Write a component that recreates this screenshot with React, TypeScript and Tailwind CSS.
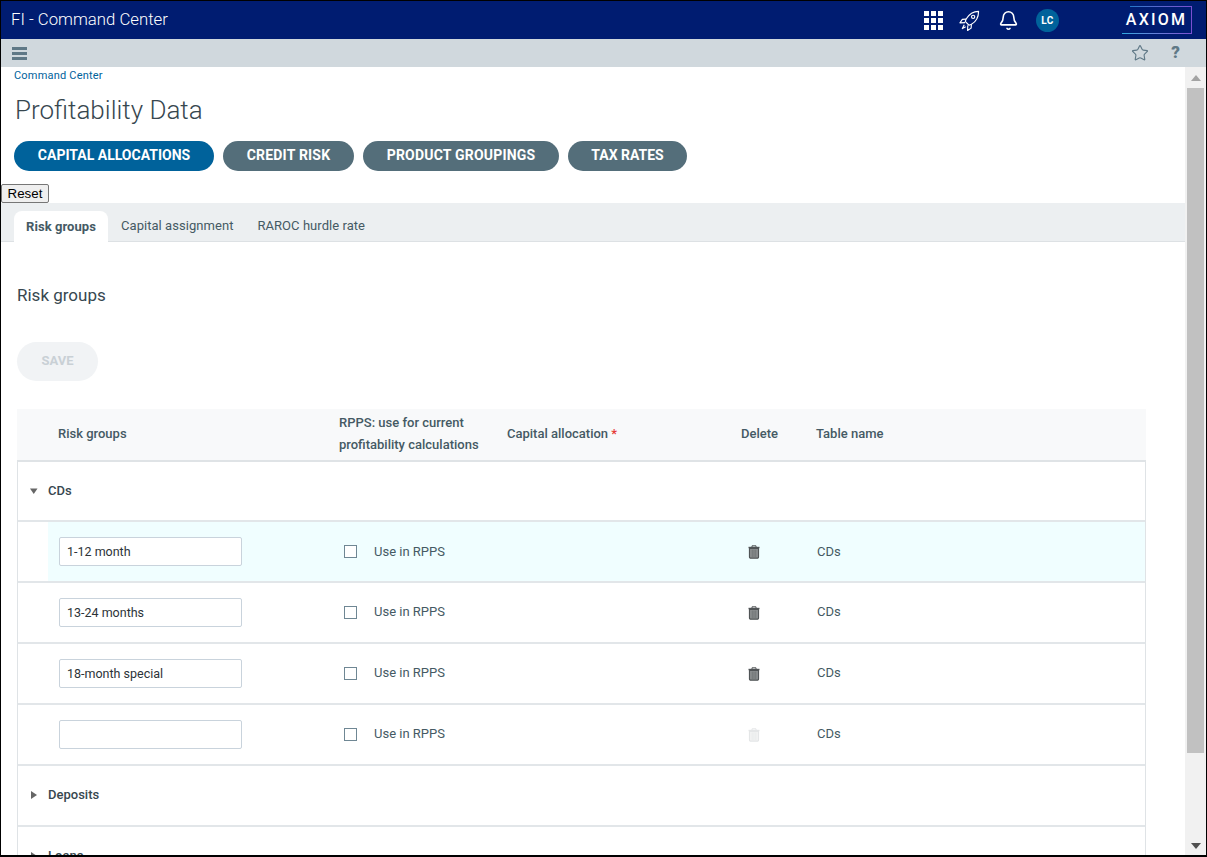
import { Bell, Star } from 'lucide-react'

const ROWS = [
  { value: '1-12 month', active: true },
  { value: '13-24 months' },
  { value: '18-month special' },
  { value: '', disabled: true },
]

const PILLS = [
  { label: 'CAPITAL ALLOCATIONS', style: 'w-[200px] bg-[#00629b]' },
  { label: 'CREDIT RISK', style: 'w-[131px] bg-[#546e7a] tracking-[0.2px]' },
  { label: 'PRODUCT GROUPINGS', style: 'w-[196px] bg-[#546e7a] tracking-[0.2px]' },
  { label: 'TAX RATES', style: 'w-[119px] bg-[#546e7a]' },
]

function Trash({ disabled }: { disabled?: boolean }) {
  const c = disabled ? '#e4e6e7' : '#505456'
  return (
    <svg width="12" height="14" viewBox="0 0 12 14" className="block">
      <path d="M4 2V.8h4V2" fill="none" stroke={c} strokeWidth="1" />
      <path d="M.5 2.5h11" stroke={c} strokeWidth="1.4" />
      <path d="M1.500 3.500h9V12a1.200 1.200 0 0 1-1.200 1.200H2.700A1.200 1.200 0 0 1 1.500 12z" fill={disabled ? '#f2f3f3' : '#8e9293'} stroke={c} strokeWidth="1.200" />
      <path d="M4.200 4.500v7.500M6 4.500v7.500M7.800 4.500v7.500" stroke={c} strokeWidth=".7" opacity=".7" />
    </svg>
  )
}

function Caret({ open }: { open?: boolean }) {
  return (
    <svg width="8" height="8" viewBox="0 0 8 8" className="block">
      {open ? <path d="M0 1.500h7.500L3.750 7z" fill="#666" /> : <path d="M1 0v8l6-4z" fill="#666" />}
    </svg>
  )
}

function RocketIcon() {
  return (
    <svg width="21" height="21" viewBox="0 0 22 22" fill="none" stroke="white" strokeWidth="1.200" strokeLinejoin="round" className="mr-[18px]">
      <path d="M20.500 1.500C15.500 1.500 10.500 4.500 7.500 9.500L6.500 12l4 4 2.500-1c5-3 7.500-8 7.500-13.500z" />
      <circle cx="14.800" cy="7.200" r="1.700" />
      <path d="M7.500 9.500 3.500 9.800 1 13.500l5.300-.3" />
      <path d="M13 15l-.3 4-3.700 2.500.2-5.400" />
      <path d="M5.500 15.500 3.500 19.500l3.500-2" />
    </svg>
  )
}

function Group({ name, open, first }: { name: string; open?: boolean; first?: boolean }) {
  return (
    <div className={`${first ? 'h-[60px]' : 'h-[61px] pb-[2px]'} border-b-2 border-[#e2e6e9] flex items-center text-[13px] font-medium text-[#37474f] pl-[12px]`}>
      <span className="w-[18px]"><Caret open={open} /></span>
      {name}
    </div>
  )
}

export default function App() {
  return (
    <div className="h-[857px] overflow-hidden border border-b-2 border-black flex flex-col bg-white font-['Roboto',sans-serif]">
      {/* Top bar */}
      <div className="h-[38px] shrink-0 bg-[#001c71] flex items-center text-white pl-[10px]">
        <span className="text-[16.750px] font-light flex-1">FI - Command Center</span>
        <div className="grid grid-cols-3 gap-[2px] w-[19px] mr-[16px]">
          {Array.from({ length: 9 }).map((_, i) => <span key={i} className="w-[5px] h-[5px] bg-white" />)}
        </div>
        <RocketIcon />
        <Bell size={21} strokeWidth={1.800} className="mr-[17px]" />
        <span className="w-[23px] h-[23px] rounded-full bg-[#00629b] text-[10px] font-bold flex items-center justify-center tracking-[0.5px] mr-[63px]">LC</span>
        <div className="relative w-[70px] h-[28px] mr-[14px] flex items-center justify-center pr-[1px] text-[16px] font-medium tracking-[2.200px]">
          AXIOM
          <span className="absolute right-0 top-0 left-[8px] h-[1px] bg-gradient-to-r from-[#1e78c8] to-[#7a4fd0]" />
          <span className="absolute right-0 top-0 bottom-0 w-[1px] bg-[#7a4fd0]" />
          <span className="absolute left-0 right-0 bottom-0 h-[1px] bg-gradient-to-r from-[#2aa8e0] to-[#7a4fd0]" />
        </div>
      </div>
      {/* Secondary bar */}
      <div className="h-[28px] shrink-0 bg-[#d0d8dd] flex items-center pl-[11px] pr-[26px] text-[#5f7886]">
        <div className="flex-1 flex flex-col gap-[2px]">
          <span className="w-[15px] h-[3px] bg-[#5f7886]" />
          <span className="w-[15px] h-[3px] bg-[#5f7886]" />
          <span className="w-[15px] h-[3px] bg-[#5f7886]" />
        </div>
        <Star size={18} strokeWidth={1.500} className="mr-[22px]" />
        <span className="text-[17px] font-black">?</span>
      </div>

      <div className="flex-1 min-h-0 flex">
        {/* Scrolling content */}
        <div className="flex-1 min-w-0 overflow-hidden">
          <div className="pl-[13px] pt-[2px] text-[11px] leading-[13px] tracking-[0.2px] text-[#00629b]">Command Center</div>
          <h1 className="pl-[14px] mt-[11px] text-[26px] leading-[34px] font-light text-[#37474f]">Profitability Data</h1>
          <div className="flex gap-[9px] pl-[13px] mt-[14px]">
            {PILLS.map(p => (
              <div key={p.label} className={`${p.style} h-[30px] pb-[1px] rounded-full flex items-center justify-center text-white text-[14px] font-bold`}>{p.label}</div>
            ))}
          </div>
          <button className="block mt-[13px] h-[19px] w-[48px] bg-[#efefef] border border-[#767676] rounded-[2px] text-[13.330px] leading-none text-black font-['Liberation_Sans',sans-serif]">Reset</button>

          <div className="h-[39px] bg-[#eceff1] border-b border-[#dde1e4] flex items-end pl-[13px] text-[13px] tracking-[0.05px] text-[#455a64]">
            <div className="h-[31px] w-[94px] -mb-[1px] bg-white rounded-t-[8px] flex items-center justify-center font-bold">Risk groups</div>
            <div className="h-[30px] flex items-center pl-[13px]">Capital assignment</div>
            <div className="h-[30px] flex items-center pl-[24px]">RAROC hurdle rate</div>
          </div>

          <div className="pl-[16px] pr-[39px]">
            <h2 className="mt-[43px] text-[17px] leading-[20px] text-[#37474f]">Risk groups</h2>
            <div className="mt-[37px] w-[81px] h-[39px] pb-[2px] rounded-full bg-[#f1f3f5] flex items-center justify-center text-[13px] font-bold text-[#c9d0d5]">SAVE</div>

            <div className="grid grid-cols-[41px_281px_168px_234px_75px_1fr] mt-[28px] h-[51px] pb-[2px] bg-[#f8f9fa] items-center text-[13px] font-medium text-[#455a64]">
              <span />
              <span>Risk groups</span>
              <span className="leading-[22px]">RPPS: use for current<br />profitability calculations</span>
              <span>Capital allocation <span className="text-[#e53935]">*</span></span>
              <span>Delete</span>
              <span>Table name</span>
            </div>

            <div className="border-x border-t-2 border-[#dfe3e6]">
              <Group name="CDs" open first />
              {ROWS.map(r => (
                <div key={r.value} className="h-[61px] border-b-2 border-[#e2e6e9] flex">
                  <div className="w-[30px] shrink-0" />
                  <div className={`grid grid-cols-[280px_168px_234px_75px_1fr] flex-1 items-center text-[13px] text-[#455a64] pl-[11px] ${r.active ? 'bg-[#f0feff]' : ''}`}>
                    <input
                      readOnly
                      value={r.value}
                      className="w-[183px] h-[29px] px-[7px] bg-white border border-[#c9d3dc] rounded-[2px] text-[12.500px] text-[#2c3338] outline-none"
                    />
                    <div className="flex items-center pl-[5px]">
                      <span className="w-[13px] h-[13px] border border-[#6f8794] bg-white mr-[17px]" />
                      <span className={r.active ? '' : 'pb-[2px]'}>Use in RPPS</span>
                    </div>
                    <span />
                    <span className="pl-[7px]"><Trash disabled={r.disabled} /></span>
                    <span className={`pl-[1px] ${r.active ? '' : 'pb-[2px]'}`}>CDs</span>
                  </div>
                </div>
              ))}
              <Group name="Deposits" />
              <Group name="Loans" />
            </div>
          </div>
        </div>

        {/* Scrollbar */}
        <div className="w-[21px] shrink-0 bg-[#f1f1f1] flex flex-col items-center">
          <div className="h-[21px] flex items-center justify-center">
            <svg width="10" height="6" viewBox="0 0 10 6"><path d="M5 0l5 6H0z" fill="#a3a3a3" /></svg>
          </div>
          <div className="h-[665px] w-[17px] bg-[#c1c1c1]" />
          <div className="flex-1 flex items-end pb-[6px]">
            <svg width="10" height="6" viewBox="0 0 10 6"><path d="M0 0h10L5 6z" fill="#505050" /></svg>
          </div>
        </div>
      </div>
    </div>
  )
}
